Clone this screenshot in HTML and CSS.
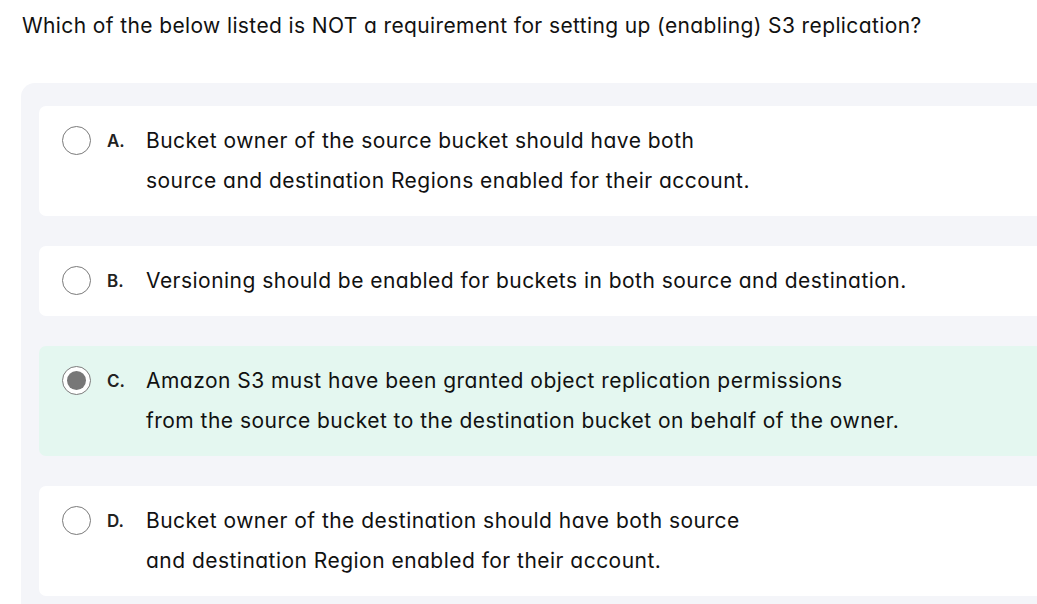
FILE: index.html
```html
<!DOCTYPE html>
<html lang="en">
<head>
<meta charset="utf-8">
<title>Question</title>
<link rel="stylesheet" href="styles.css">
</head>
<body>
<div class="page">
  <p class="question">Which of the below listed is NOT a requirement for setting up (enabling) S3 replication?</p>
  <div class="panel">
    <div class="option">
      <span class="radio"></span>
      <span class="letter">A.</span>
      <span class="text">Bucket owner of the source bucket should have both<br>source and destination Regions enabled for their account.</span>
    </div>
    <div class="option">
      <span class="radio"></span>
      <span class="letter">B.</span>
      <span class="text">Versioning should be enabled for buckets in both source and destination.</span>
    </div>
    <div class="option selected">
      <span class="radio checked"></span>
      <span class="letter">C.</span>
      <span class="text">Amazon S3 must have been granted object replication permissions<br>from the source bucket to the destination bucket on behalf of the owner.</span>
    </div>
    <div class="option">
      <span class="radio"></span>
      <span class="letter">D.</span>
      <span class="text">Bucket owner of the destination should have both source<br>and destination Region enabled for their account.</span>
    </div>
  </div>
</div>
</body>
</html>
```

FILE: styles.css
```css
html, body {
  margin: 0;
  padding: 0;
  background: #ffffff;
  overflow: hidden;
}
.page {
  width: 1037px;
  height: 604px;
  overflow: hidden;
  font-family: Inter, "Noto Sans", sans-serif;
  font-feature-settings: "cv11" 1;
  color: #111;
}
.question {
  margin: 0;
  padding: 12px 0 0 22px;
  font-size: 21px;
  line-height: 28px;
  letter-spacing: 0.38px;
  white-space: nowrap;
}
.panel {
  margin: 43px 0 0 21px;
  width: 1100px;
  background: #f4f5f9;
  border-radius: 14px;
  padding: 23px 0 30px 18px;
  display: flex;
  flex-direction: column;
  gap: 30px;
}
.option {
  background: #ffffff;
  border-radius: 7px;
  padding: 15px 0 15px 23px;
  display: flex;
  align-items: flex-start;
}
.option.selected {
  background: #e4f7f0;
}
.radio {
  flex: none;
  width: 29px;
  height: 29px;
  border: 1.5px solid #7a7a7a;
  border-radius: 50%;
  margin-top: 5px;
  box-sizing: border-box;
  display: flex;
  align-items: center;
  justify-content: center;
  background: #fff;
}
.radio.checked::after {
  content: "";
  width: 19px;
  height: 19px;
  border-radius: 50%;
  background: #777;
}
.letter {
  flex: none;
  width: 39px;
  margin-left: 16px;
  font-size: 17px;
  font-weight: 600;
  line-height: 40px;
  color: #222;
}
.text {
  font-size: 21px;
  line-height: 40px;
  letter-spacing: 0.47px;
  white-space: nowrap;
}
```
